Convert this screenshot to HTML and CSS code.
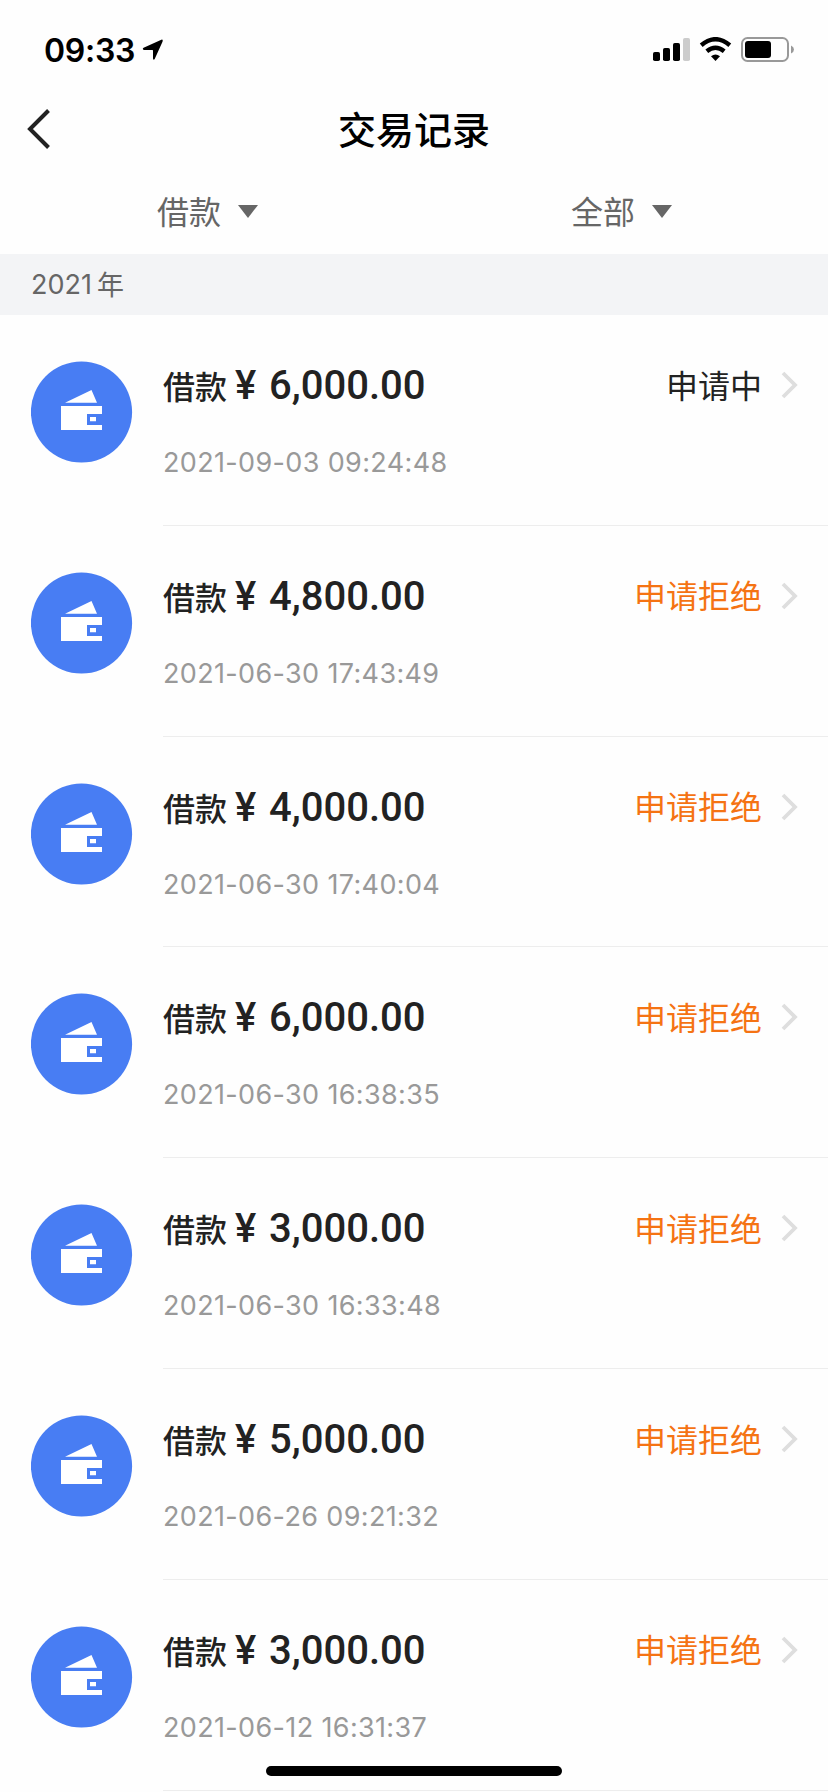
FILE: index.html
```html
<!DOCTYPE html>
<html lang="zh-CN">
<head>
<meta charset="utf-8">
<title>交易记录</title>
<link rel="stylesheet" href="styles.css">
</head>
<body>
<svg class="defs" aria-hidden="true">
  <symbol id="wallet" viewBox="0 0 102 102">
    <circle cx="50.5" cy="51" r="50.6" fill="#487df3"/>
    <path d="M34 41.7 60.5 29 66 41.7ZM30 45H71V53H56V64H71V69H30ZM59 56H65V60.3H59Z" fill="#fff"/>
  </symbol>
  <symbol id="next" viewBox="0 0 18 28">
    <path d="M2 2 14 14 2 26" fill="none" stroke="#dedede" stroke-width="3.8"/>
  </symbol>
</svg>
<main class="screen">
  <header class="status-bar">
    <span class="clock">09:33</span>
    <svg class="location" viewBox="0 0 22 22"><path d="M18.8.9Q21.4-.2 20.5 2.7L12.7 20Q11.6 21.8 11 19.5V11.5Q11 10.9 10.4 10.9H2Q-.2 10.2 1.6 8.8Z"/></svg>
    <svg class="system" viewBox="0 0 144 28">
      <rect x="0" y="15" width="7" height="9" rx="1.8"/><rect x="10" y="11" width="7" height="13" rx="1.8"/><rect x="20" y="6" width="7" height="18" rx="1.8"/><rect x="30" y="1" width="7" height="23" rx="1.8" fill="#ccc"/>
      <g fill="none" stroke="#000" stroke-width="4.4"><path d="M48.2 8.2Q62.5-3.8 76.8 8.2"/><path d="M53.8 14.3Q62.5 7.3 71.2 14.3"/></g>
      <path d="M58 19.2Q62.5 15.8 67 19.2L62.5 24Z"/>
      <rect x="89" y="1" width="46" height="23" rx="5.5" fill="none" stroke="#999" stroke-width="2"/><rect x="92" y="4" width="26" height="17" rx="3"/>
      <path d="M138 8.5Q141 9.8 141 12.5T138 16.5Z" fill="#999"/>
    </svg>
  </header>
  <nav class="nav">
    <svg class="back" viewBox="0 0 26 42"><path d="M22.5 2.5 4 21 22.5 39.5" fill="none" stroke="#222" stroke-width="4"/></svg>
    <h1 class="title">交易记录</h1>
  </nav>
  <div class="filters">
    <div class="filter"><span class="filter-label">借款</span><i class="caret"></i></div>
    <div class="filter"><span class="filter-label">全部</span><i class="caret"></i></div>
  </div>
  <h2 class="year"><span class="year-number">2021</span><span class="year-unit">年</span></h2>
  <section class="list">
    <article class="row"><svg class="wallet"><use href="#wallet"/></svg><div class="body"><div class="head"><span class="kind">借款</span><span class="yen">¥</span><span class="amount">6,000.00</span><span class="state">申请中</span><svg class="next"><use href="#next"/></svg></div><time class="date">2021-09-03 09:24:48</time></div></article>
    <article class="row"><svg class="wallet"><use href="#wallet"/></svg><div class="body"><div class="head"><span class="kind">借款</span><span class="yen">¥</span><span class="amount">4,800.00</span><span class="state rejected">申请拒绝</span><svg class="next"><use href="#next"/></svg></div><time class="date">2021-06-30 17:43:49</time></div></article>
    <article class="row"><svg class="wallet"><use href="#wallet"/></svg><div class="body"><div class="head"><span class="kind">借款</span><span class="yen">¥</span><span class="amount">4,000.00</span><span class="state rejected">申请拒绝</span><svg class="next"><use href="#next"/></svg></div><time class="date">2021-06-30 17:40:04</time></div></article>
    <article class="row"><svg class="wallet"><use href="#wallet"/></svg><div class="body"><div class="head"><span class="kind">借款</span><span class="yen">¥</span><span class="amount">6,000.00</span><span class="state rejected">申请拒绝</span><svg class="next"><use href="#next"/></svg></div><time class="date">2021-06-30 16:38:35</time></div></article>
    <article class="row"><svg class="wallet"><use href="#wallet"/></svg><div class="body"><div class="head"><span class="kind">借款</span><span class="yen">¥</span><span class="amount">3,000.00</span><span class="state rejected">申请拒绝</span><svg class="next"><use href="#next"/></svg></div><time class="date">2021-06-30 16:33:48</time></div></article>
    <article class="row"><svg class="wallet"><use href="#wallet"/></svg><div class="body"><div class="head"><span class="kind">借款</span><span class="yen">¥</span><span class="amount">5,000.00</span><span class="state rejected">申请拒绝</span><svg class="next"><use href="#next"/></svg></div><time class="date">2021-06-26 09:21:32</time></div></article>
    <article class="row"><svg class="wallet"><use href="#wallet"/></svg><div class="body"><div class="head"><span class="kind">借款</span><span class="yen">¥</span><span class="amount">3,000.00</span><span class="state rejected">申请拒绝</span><svg class="next"><use href="#next"/></svg></div><time class="date">2021-06-12 16:31:37</time></div></article>
  </section>
  <div class="home-indicator"></div>
</main>
</body>
</html>
```
FILE: styles.css
```css
* { box-sizing: border-box; }
body { margin: 0; background: #fefefe; }
.defs { display: none; }
.screen {
  position: relative;
  width: 828px;
  height: 1792px;
  overflow: hidden;
  font-family: "Noto Sans CJK SC", sans-serif;
  color: #222;
}
.status-bar {
  display: flex;
  align-items: center;
  height: 88px;
  padding: 13px 30px 0 44px;
}
.clock {
  width: 98px;
  font: 600 32px/40px Inter, sans-serif;
  letter-spacing: -0.3px;
  color: #000;
}
.location { width: 22px; height: 22px; margin-bottom: 2px; }
.system { width: 144px; height: 28px; margin-left: auto; margin-right: 1px; }
.nav {
  display: grid;
  grid-template-columns: 60px 1fr 60px;
  align-items: center;
  height: 82px;
}
.back { width: 26px; height: 42px; margin-left: 26px; }
.title {
  margin: 0;
  padding-bottom: 3px;
  text-align: center;
  font-size: 38px;
  line-height: 50px;
  font-weight: 500;
  color: #000;
}
.filters { display: grid; grid-template-columns: 1fr 1fr; height: 84px; }
.filter {
  display: flex;
  align-items: center;
  gap: 17px;
  height: 82px;
  padding-left: 157px;
  font-size: 32px;
  line-height: 44px;
  color: #666;
}
.filter-label { padding-bottom: 3px; }
.caret {
  border: solid transparent;
  border-width: 13px 10px 0;
  border-top-color: #666;
}
.year {
  display: flex;
  align-items: center;
  gap: 5px;
  height: 61px;
  margin: 0;
  padding-left: 31px;
  background: #f3f4f6;
  color: #666;
  font-size: 27px;
  font-weight: 400;
}
.year-number { font-family: Inter, sans-serif; }
.year-unit { padding-bottom: 2px; }
.row { display: flex; height: 210.83px; padding-left: 31px; }
.wallet { width: 102px; height: 102px; margin-top: 46px; flex: none; }
.body {
  flex: 1;
  margin-left: 30px;
  padding-top: 42px;
  border-bottom: 1px solid #ededed;
}
.head { display: flex; align-items: center; height: 56px; padding-right: 29px; }
.kind { width: 72px; font-size: 32px; font-weight: 500; line-height: 44px; }
.yen, .amount { padding-top: 2px; font: 500 40px/48px Roboto, sans-serif; }
.yen { width: 34px; }
.state { margin-left: auto; padding-bottom: 3px; font-size: 32px; line-height: 44px; }
.rejected { color: #f57313; }
.next { width: 18px; height: 28px; margin-left: 19px; }
.date {
  display: block;
  margin-top: 32px;
  font: 400 27px/36px Inter, sans-serif;
  letter-spacing: 0.35px;
  color: #999;
}
.home-indicator {
  position: absolute;
  left: 266px;
  top: 1766px;
  width: 296px;
  height: 10px;
  border-radius: 5px;
  background: #000;
}
```
